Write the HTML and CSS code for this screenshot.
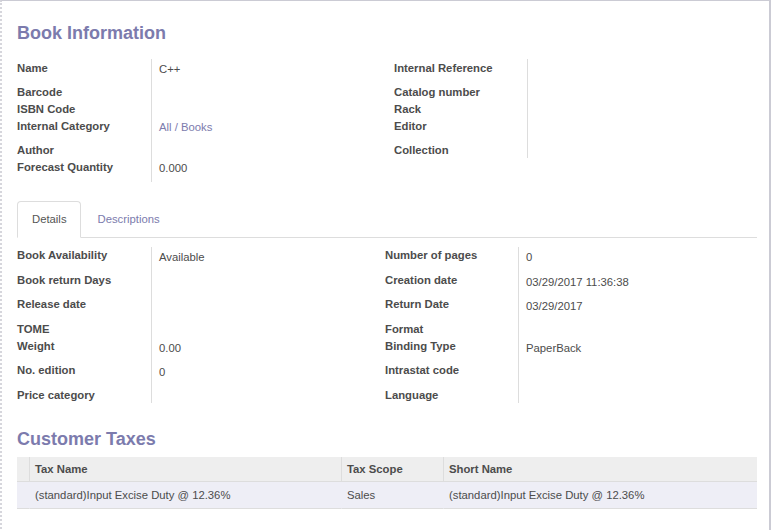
FILE: index.html
```html
<!DOCTYPE html>
<html>
<head>
<meta charset="utf-8">
<link rel="stylesheet" href="styles.css">
</head>
<body>
<div class="sheet">
  <h1 class="title">Book Information</h1>

  <div class="group group-top">
    <div class="lbl">Name</div><div class="val">C++</div>
    <div class="lbl">Internal Reference</div><div class="val"></div>

    <div class="lbl">Barcode</div><div class="val"></div>
    <div class="lbl">Catalog number</div><div class="val"></div>

    <div class="lbl">ISBN Code</div><div class="val"></div>
    <div class="lbl">Rack</div><div class="val"></div>

    <div class="lbl">Internal Category</div><div class="val"><span class="link">All / Books</span></div>
    <div class="lbl">Editor</div><div class="val"></div>

    <div class="lbl">Author</div><div class="val"></div>
    <div class="lbl">Collection</div><div class="val"></div>

    <div class="lbl">Forecast Quantity</div><div class="val">0.000</div>
  </div>

  <div class="tabs">
    <div class="tab active">Details</div>
    <div class="tab">Descriptions</div>
  </div>

  <div class="group group-details">
    <div class="lbl">Book Availability</div><div class="val">Available</div>
    <div class="lbl">Number of pages</div><div class="val">0</div>

    <div class="lbl">Book return Days</div><div class="val"></div>
    <div class="lbl">Creation date</div><div class="val">03/29/2017 11:36:38</div>

    <div class="lbl">Release date</div><div class="val"></div>
    <div class="lbl">Return Date</div><div class="val">03/29/2017</div>

    <div class="lbl">TOME</div><div class="val"></div>
    <div class="lbl">Format</div><div class="val"></div>

    <div class="lbl">Weight</div><div class="val">0.00</div>
    <div class="lbl">Binding Type</div><div class="val">PaperBack</div>

    <div class="lbl">No. edition</div><div class="val">0</div>
    <div class="lbl">Intrastat code</div><div class="val"></div>

    <div class="lbl">Price category</div><div class="val"></div>
    <div class="lbl">Language</div><div class="val"></div>
  </div>

  <h2 class="title taxes-title">Customer Taxes</h2>

  <table class="taxes">
    <colgroup>
      <col class="c-handle">
      <col class="c-name">
      <col class="c-scope">
      <col class="c-short">
    </colgroup>
    <thead>
      <tr>
        <th class="handle"></th>
        <th>Tax Name</th>
        <th class="sep">Tax Scope</th>
        <th class="sep">Short Name</th>
      </tr>
    </thead>
    <tbody>
      <tr>
        <td class="handle"></td>
        <td>(standard)Input Excise Duty @ 12.36%</td>
        <td class="sep">Sales</td>
        <td class="sep">(standard)Input Excise Duty @ 12.36%</td>
      </tr>
    </tbody>
  </table>
</div>
</body>
</html>
```

FILE: styles.css
```css
html, body {
  margin: 0;
  padding: 0;
  background: #ffffff;
}

body {
  font-family: "Liberation Sans", Arial, sans-serif;
  font-size: 11.3px;
  line-height: 13px;
  color: #4c4c4c;
}

.sheet {
  box-sizing: border-box;
  width: 771px;
  min-height: 560px;
  border-top: 1px solid #cbcbd4;
  border-right: 2px solid #cbcbd4;
  border-left: 2px dotted #d6d6dc;
  padding: 21px 12px 0 15px;
  background: #ffffff;
}

.title {
  margin: 0;
  font-size: 18px;
  line-height: 22px;
  font-weight: bold;
  color: #7c7bad;
}

.group {
  display: grid;
}

.group-top {
  margin-top: 15px;
  grid-template-columns: 134px 243px 133px 230px;
  grid-template-rows: 24px 17px 17px 24px 17px 24px;
}

.group-details {
  margin-top: 9px;
  grid-template-columns: 134px 234px 133px 239px;
  grid-template-rows: 25px 24px 25px 17px 24px 25px 16px;
}

.lbl {
  font-weight: bold;
  padding-top: 2.5px;
  white-space: nowrap;
}

.val {
  border-left: 1px solid #dddddd;
  padding: 4px 0 0 7px;
  white-space: nowrap;
}

.group-details .lbl {
  padding-top: 1.5px;
}

.group-details .val {
  padding-top: 3.5px;
}

.link {
  color: #7c7bad;
}

.tabs {
  display: flex;
  margin-top: 19px;
  border-bottom: 1px solid #dddddd;
}

.tab {
  padding: 10px 13px 10px 14px;
  line-height: 15px;
  border: 1px solid transparent;
  border-radius: 4px 4px 0 0;
  margin-right: 2px;
  margin-bottom: -1px;
  color: #7c7bad;
}

.tab.active {
  color: #555555;
  border-color: #dddddd;
  border-bottom-color: #ffffff;
  background: #ffffff;
}

.taxes-title {
  margin-top: 25px;
}

.taxes {
  margin-top: 7px;
  width: 740px;
  table-layout: fixed;
  border-collapse: separate;
  border-spacing: 0;
}

.c-handle { width: 13px; }
.c-name { width: 311px; }
.c-scope { width: 102px; }
.c-short { width: 314px; }

.taxes th {
  background: #eeeeee;
  font-weight: bold;
  text-align: left;
  padding: 6px 5px 5px 5px;
  border-bottom: 1px solid #dddddd;
  white-space: nowrap;
}

.taxes th.handle {
  padding: 0;
  border-right: 1px solid #dddddd;
}

.taxes th.sep {
  border-left: 1px solid #dddddd;
}

.taxes td {
  background: #eeeef6;
  padding: 7px 5px 6px 5px;
  border-bottom: 1px solid #dddddd;
  white-space: nowrap;
}

.taxes td.handle {
  padding: 0;
  border-right: 1px solid #eeeef6;
}

.taxes td.sep {
  border-left: 1px solid #eeeef6;
}
```
